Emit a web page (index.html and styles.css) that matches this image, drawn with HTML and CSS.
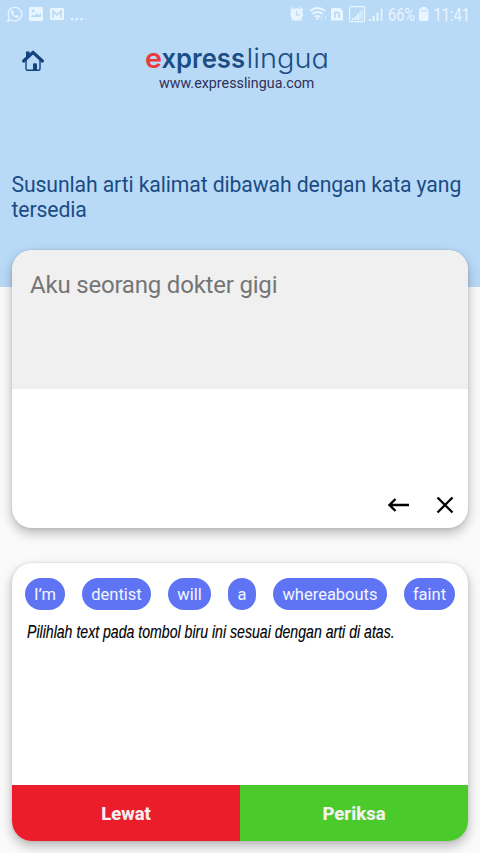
FILE: index.html
```html
<!DOCTYPE html>
<html lang="id">
<head>
<meta charset="utf-8">
<meta name="viewport" content="width=device-width">
<title>Expresslingua</title>
<link rel="stylesheet" href="styles.css">
</head>
<body>
<header class="hero">
  <div class="status">
    <svg class="status-left" width="90" height="28" viewBox="0 0 90 28">
      <path d="M7.800 21.200l1.200-3.800a6.800 6.800 0 1 1 2.500 2.600z" fill="none" stroke="currentColor" stroke-width="1.300"/>
      <path d="M12.300 10.300c-1.500.6-1.600 2.200-.6 3.900 1.300 2.200 3.100 3.500 5.300 3.700 1.200.1 2-.7 2-1.900l-2.200-1.100-1.100 1.100c-1.300-.6-2.100-1.500-2.600-2.600l.8-1.100z" fill="currentColor"/>
      <path fill-rule="evenodd" d="M30 7h12a1 1 0 0 1 1 1v12a1 1 0 0 1-1 1H30a1 1 0 0 1-1-1V8a1 1 0 0 1 1-1zM31 17h10v-4l-2 2-2-2-3 3-1.500-1.500-1.500 1.500zM33.200 9.500a1.500 1.500 0 1 0 0 3 1.500 1.500 0 0 0 0-3z" fill="currentColor"/>
      <rect x="50" y="8" width="14" height="12" rx="1" fill="currentColor"/>
      <path d="M53 18v-7l4 3.800 4-3.800v7" fill="none" stroke="#b9daf7" stroke-width="1.600"/>
      <path d="M71 18h2.200v2.200H71zM75.600 18h2.200v2.200h-2.200zM80.500 18h2.200v2.200h-2.200z" fill="currentColor"/>
    </svg>
    <svg class="status-right" width="190" height="28" viewBox="290 0 190 28">
      <path d="M290.500 10.500l3-3M303 10.500l-3-3M292 20.500l1.500-1.500M301.500 20.500L300 19" stroke="currentColor" stroke-width="1.600"/>
      <circle cx="296.700" cy="14.500" r="6.200" fill="currentColor"/>
      <path d="M296.500 10.500v4.300h3.500" fill="none" stroke="#b9daf7" stroke-width="1.300"/>
      <path d="M310 11q7.500-6 15 0M312.500 14q5-4 10 0M315 17q2.500-2 5 0" fill="none" stroke="currentColor" stroke-width="1.700"/>
      <path d="M316 18.500l1.500-1.200 1.500 1.200-1.500 1.800z" fill="currentColor"/>
      <path d="M321.500 16v4M320 18.500l1.500 1.500 1.500-1.500M325.500 20v-4M324 17.500l1.500-1.500 1.500 1.500" fill="none" stroke="currentColor" stroke-width=".8" opacity=".5"/>
      <path d="M332 8h8l3 3v9.500h-12V9z" fill="currentColor"/>
      <path d="M335 18v-5.500h2.500q1.500 0 1.500 1.500v4" fill="none" stroke="#b9daf7" stroke-width="1.700"/>
      <rect x="349.600" y="6.600" width="15" height="15" rx="1" fill="none" stroke="currentColor" stroke-width="1.200"/>
      <path d="M359 12l4-3.500V20h-4z" fill="currentColor" opacity=".5"/>
      <path d="M352 18h1.500v2H352zM354.500 16.500h1.800V20h-1.800zM357 14h1.800v6H357z" fill="currentColor"/>
      <path d="M369 19h2v2h-2zM372.500 16h2v5h-2zM376.500 12.500h2V21h-2zM380.800 8.500h1.500V21h-1.500z" fill="currentColor"/>
      <text x="388" y="21" font-size="17.500" textLength="27" lengthAdjust="spacingAndGlyphs">66%</text>
      <path d="M421.500 7h4.500v1.500h1.700q.7 0 .7.700V20q0 1-.8 1h-7.800q-.8 0-.8-1V9.200q0-.7.700-.7h1.800z" fill="currentColor"/>
      <path d="M420.200 9.700h7.200v2.300h-7.200z" fill="#b9daf7" opacity=".55"/>
      <text x="433.500" y="21" font-size="17.500" textLength="36.500" lengthAdjust="spacingAndGlyphs">11:41</text>
    </svg>
  </div>
  <div class="brand-row">
    <svg class="home" width="24" height="24" viewBox="0 0 24 24">
      <path d="M5 11v8.700q0 1.500 1.500 1.500h11q1.500 0 1.500-1.500V11" fill="none" stroke="currentColor" stroke-width="1.400"/>
      <path d="M5 2.500h3.500v4L5 9.500z" fill="currentColor"/>
      <path d="M2.600 12L12 3.300l9.400 8.700" fill="none" stroke="currentColor" stroke-width="3.200" stroke-linecap="round" stroke-linejoin="round"/>
      <path d="M12 21v-5.500q0-1.300 1.300-1.300h1.400q1.300 0 1.300 1.300V21z" fill="currentColor"/>
    </svg>
    <div class="brand">
      <svg class="logo" width="186" height="34" viewBox="0 0 186 34">
        <text y="23.500" font-size="27.500"><tspan class="logo-bold" x="1" textLength="17" lengthAdjust="spacingAndGlyphs" fill="#e93a40">e</tspan><tspan class="logo-bold" x="17.500" textLength="83.500" lengthAdjust="spacingAndGlyphs" fill="#1c4d85">xpress</tspan><tspan class="logo-light" x="102.500" textLength="82.500" lengthAdjust="spacingAndGlyphs" fill="#1c4d85">lingua</tspan></text>
      </svg>
      <div class="site">www.expresslingua.com</div>
    </div>
  </div>
  <h1 class="prompt">Susunlah arti kalimat dibawah dengan kata yang tersedia</h1>
</header>
<main>
  <section class="card answer">
    <div class="question">Aku seorang dokter gigi</div>
    <div class="tools">
      <svg width="22" height="18" viewBox="0 0 22 18"><path d="M21 9H2M7.500 3L1.500 9l6 6" fill="none" stroke="#000" stroke-width="2.300"/></svg>
      <svg width="18" height="18" viewBox="0 0 18 18"><path d="M1.500 1.500l15 15M16.500 1.500l-15 15" stroke="#000" stroke-width="2.300"/></svg>
    </div>
  </section>
  <section class="card words">
    <div class="chips">
      <button class="chip im">I’m</button>
      <button class="chip dentist">dentist</button>
      <button class="chip will">will</button>
      <button class="chip a">a</button>
      <button class="chip where">whereabouts</button>
      <button class="chip faint">faint</button>
    </div>
    <p class="hint">Pilihlah text pada tombol biru ini sesuai dengan arti di atas.</p>
    <div class="actions">
      <button class="skip">Lewat</button>
      <button class="check">Periksa</button>
    </div>
  </section>
</main>
</body>
</html>
```
FILE: styles.css
```css
* { box-sizing: border-box; }
body {
  margin: 0;
  height: 853px;
  overflow: hidden;
  background: #fafafa;
  font-family: Roboto, "Liberation Sans", sans-serif;
}
svg { display: block; flex: none; }
button { border: 0; padding: 0; font-family: inherit; }
.hero { height: 287px; background: #b9daf7; }
.status {
  display: flex;
  justify-content: space-between;
  height: 28px;
  color: #e9f5ff;
}
.status text { fill: #e9f5ff; }
.brand-row { display: flex; height: 145px; padding: 12px 0 0 21px; }
.home { margin-top: 9px; color: #12447f; }
.brand { margin-left: 99px; width: 186px; }
.logo { overflow: visible; margin-top: 4px; }
.logo text { font-family: Inter, sans-serif; font-feature-settings: "cv11" 1; }
.logo-bold { font-weight: 600; }
.logo-light { font-weight: 300; }
.site {
  margin-top: -3px;
  padding-left: 15px;
  font-size: 14.3px;
  line-height: 17px;
  color: #302f59;
  white-space: nowrap;
}
.prompt {
  margin: 0;
  padding-left: 11.5px;
  font-size: 21.2px;
  font-weight: 400;
  line-height: 24.5px;
  letter-spacing: -.11px;
  color: #1b4b84;
}
main { margin-top: -37px; padding: 0 12px; }
.card {
  position: relative;
  overflow: hidden;
  border-radius: 20px;
  background: #fff;
  box-shadow: 0 5px 12px rgba(0, 0, 0, .27), 0 0 3px rgba(0, 0, 0, .12);
}
.answer { height: 278px; }
.question {
  height: 139px;
  padding: 20px 18px;
  background: #f0f0f0;
  color: #757575;
  font-size: 24px;
  line-height: 30px;
  letter-spacing: -.2px;
}
.tools {
  display: flex;
  justify-content: flex-end;
  gap: 26px;
  padding: 107px 14px 0 0;
}
.words {
  display: flex;
  flex-direction: column;
  align-items: stretch;
  height: 278px;
  margin-top: 35px;
}
.chips { display: flex; gap: 17px; padding: 14.5px 13px 0; }
.chip {
  height: 32.5px;
  padding-top: 1px;
  border-radius: 17px;
  background: #5f74f5;
  color: #f4f6ff;
  font-size: 16.5px;
  line-height: 32px;
}
.im { width: 40px; }
.dentist { width: 69px; }
.will { width: 43px; }
.a { width: 28px; }
.where { width: 114px; }
.faint { width: 51px; }
.hint {
  align-self: flex-start;
  margin: 12px 0 0 14.5px;
  font-family: "Liberation Sans", sans-serif;
  font-size: 17.8px;
  line-height: 20px;
  font-style: italic;
  white-space: nowrap;
  color: #000;
  -webkit-text-stroke: .15px #000;
  transform: scaleX(.793);
  transform-origin: 0 0;
}
.actions { display: flex; height: 56.5px; margin-top: auto; }
.actions button {
  flex: 1;
  padding-top: 2px;
  color: #f5f0f0;
  font-size: 18.5px;
  font-weight: 800;
}
.actions .skip { background: #eb1d2a; }
.actions .check { background: #4bca2b; }
```
